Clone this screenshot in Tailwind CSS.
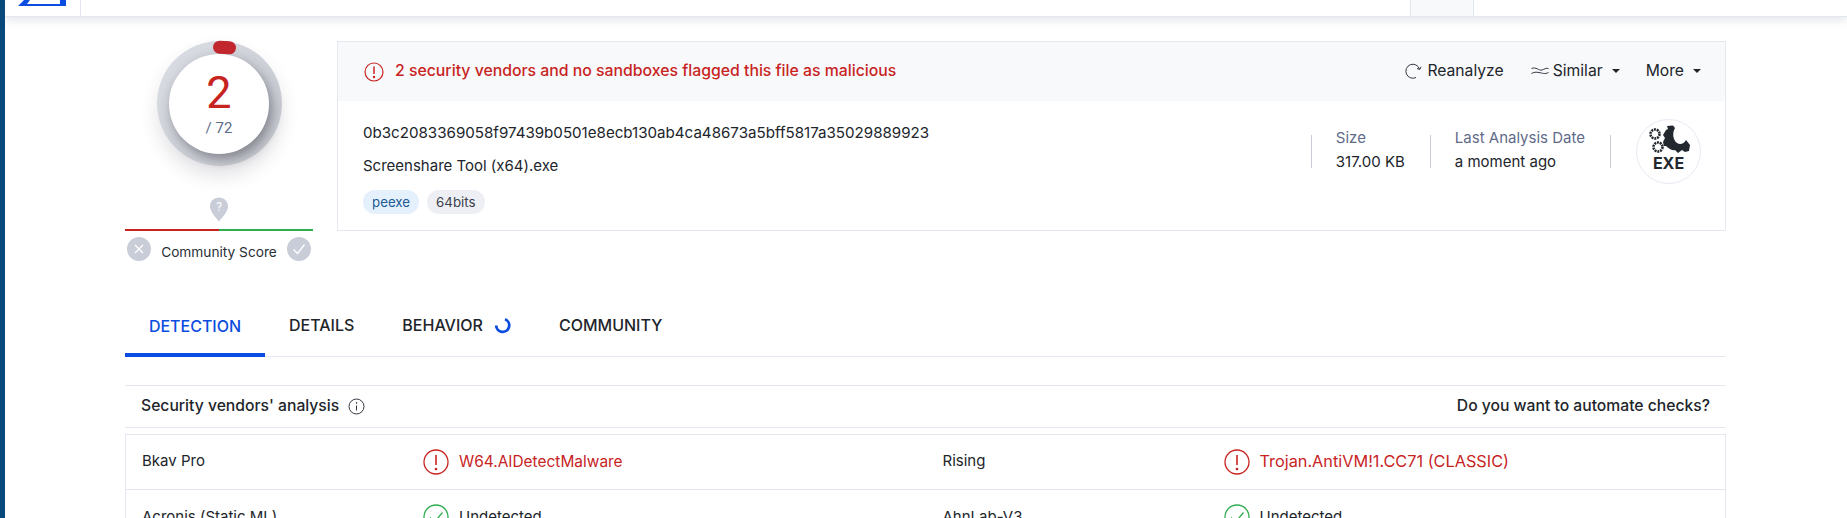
<!DOCTYPE html>
<html lang="en">
<head>
    <meta charset="UTF-8">
    <title>VirusTotal - File</title>
    <script src="https://cdn.jsdelivr.net/npm/@tailwindcss/browser@4"></script>
</head>
<body class="bg-white overflow-hidden font-['Inter',sans-serif] text-[#21252b]">
    <div class="flex h-[518px] overflow-hidden">
        <!-- Window edge -->
        <div class="w-[5px] shrink-0 bg-[#07497b]"></div>

        <div class="flex-1 min-w-0 flex flex-col">
            <!-- Top bar -->
            <div class="h-[17px] shrink-0 flex bg-white border-b border-[#e3e7f0] shadow-[0_3px_10px_rgba(80,90,120,0.16)]">
                <div class="w-[76px] shrink-0 pl-[13px] border-r border-[#e3e7f0] overflow-hidden">
                    <svg width="50" height="6" viewBox="0 0 50 6"><path d="M0 6 L6 0 H48 V6 Z M9 4 H42 V0 H12 Z" fill="#0b4de0" fill-rule="evenodd"/></svg>
                </div>
                <div class="flex-1"></div>
                <div class="w-[64px] shrink-0 bg-[#f8f9fb] border-x border-[#e3e7f0]"></div>
                <div class="w-[373px] shrink-0"></div>
            </div>

            <div class="w-[1601px] ml-[120px]">
                <!-- Score and file card -->
                <div class="flex gap-6 mt-[24px]">
                    <div class="w-[188px] shrink-0 flex flex-col items-center">
                        <div class="relative w-[125px] h-[125px] rounded-full bg-linear-to-br from-[#dcdee6] to-[#c4c6ce] shadow-[0_10px_18px_rgba(60,60,80,0.14)] flex items-center justify-center">
                            <div class="w-[100px] h-[100px] rounded-full bg-white shadow-[3px_5px_12px_rgba(30,30,40,0.42)] flex flex-col items-center pt-[19px] font-['Roboto',sans-serif]">
                                <div class="text-[45px] leading-[40px] text-[#c8241f]">2</div>
                                <div class="text-[15px] leading-[18px] mt-[6px] text-[#5f6b8a]">/ 72</div>
                            </div>
                            <div class="absolute top-0 left-[56px] w-[23px] h-[13px] rounded-full bg-[#c1272d] rotate-[4deg]"></div>
                        </div>
                        <svg class="mt-[31px]" width="20" height="25" viewBox="0 0 20 25">
                            <path d="M10 0.5 C15 0.5 19 4.3 19 9.3 C19 14.5 13.5 20.5 10 24.5 C6.5 20.5 1 14.5 1 9.3 C1 4.3 5 0.5 10 0.5 Z" fill="#c9cdd8"/>
                            <text x="10" y="14" text-anchor="middle" font-size="12" font-family="Roboto" fill="#ffffff">?</text>
                        </svg>
                        <div class="w-full flex h-[2px] mt-[7px]">
                            <div class="flex-1 bg-[#c8241f]"></div>
                            <div class="flex-1 bg-[#2fae4e]"></div>
                        </div>
                        <div class="w-full flex items-center justify-between px-[2px] mt-[5px]">
                            <div class="w-6 h-6 rounded-full bg-[#c9cdd8] flex items-center justify-center">
                                <svg width="12" height="12" viewBox="0 0 12 12" fill="none" stroke="#fff" stroke-width="1.3"><path d="M2 2 L10 10 M10 2 L2 10"/></svg>
                            </div>
                            <div class="text-[13.7px] mt-[6px] text-[#2b2f36]">Community Score</div>
                            <div class="w-6 h-6 rounded-full bg-[#c9cdd8] flex items-center justify-center">
                                <svg width="14" height="12" viewBox="0 0 14 12" fill="none" stroke="#fff" stroke-width="1.3"><path d="M1.5 6.5 L5.5 10.5 L12.5 1.5"/></svg>
                            </div>
                        </div>
                    </div>

                    <div class="flex-1 min-w-0 h-[190px] border border-[#e5e8f0]">
                        <div class="h-[59px] bg-[#f8f9fb] flex items-center pl-[26px] pr-[24px]">
                            <svg width="20" height="20" viewBox="0 0 20 20" fill="none" stroke="#c8241f" stroke-width="1.2"><circle cx="10" cy="10" r="9"/><path d="M10 4.5 V12" stroke-width="1.5"/><circle cx="10" cy="15" r="0.6" fill="#c8241f"/></svg>
                            <div class="ml-[11px] -mt-px text-[15.8px] font-medium text-[#c8241f]">2 security vendors and no sandboxes flagged this file as malicious</div>
                            <div class="ml-auto -mt-px flex items-center text-[15.7px] font-normal text-[#21252b]">
                                <svg width="18" height="18" viewBox="0 0 18 18" fill="none" stroke="#333842" stroke-width="1"><path d="M15.5 7 A7 7 0 1 0 12 15.5"/><path d="M13 6.5 L15.7 7.5 L17 4.8"/></svg>
                                <span class="ml-[5px]">Reanalyze</span>
                                <svg class="ml-[27px]" width="18" height="10" viewBox="0 0 18 10" fill="none" stroke="#333842" stroke-width="1"><path d="M0.5 2.5 C5 0.5 8 5 11 4 C13 3.5 15 1.5 17.5 2.5"/><path d="M0.5 7.5 C3 6 5 6 8 6.5 C11 7 14 8.5 17.5 6.5"/></svg>
                                <span class="ml-[4px]">Similar</span>
                                <span class="ml-[9px] w-0 h-0 border-x-[4px] border-x-transparent border-t-[4px] border-t-[#21252b]"></span>
                                <span class="ml-[26px]">More</span>
                                <span class="ml-[9px] w-0 h-0 border-x-[4px] border-x-transparent border-t-[4px] border-t-[#21252b]"></span>
                            </div>
                        </div>
                        <div class="flex pl-[25px] pr-[24px]">
                            <div class="flex-1 min-w-0 pt-[22px]">
                                <div class="text-[15.12px] leading-[20px]">0b3c2083369058f97439b0501e8ecb130ab4ca48673a5bff5817a35029889923</div>
                                <div class="text-[15px] leading-[20px] mt-[13px]">Screenshare Tool (x64).exe</div>
                                <div class="flex gap-[8px] mt-[14px]">
                                    <span class="h-6 px-[9px] rounded-full bg-[#e4f1fd] text-[13.3px] leading-6 text-[#1c5a96]">peexe</span>
                                    <span class="h-6 px-[9px] rounded-full bg-[#eeeff4] text-[13.3px] leading-6 text-[#3a3f4a]">64bits</span>
                                </div>
                            </div>
                            <div class="flex items-center h-[65px] mt-[18px]">
                                <div class="w-px h-[33px] bg-[#c9ccd4]"></div>
                                <div class="pl-[24px] pr-[25px] -mt-[2px]">
                                    <div class="text-[15px] leading-[22px] text-[#5f6b8a]">Size</div>
                                    <div class="text-[15px] leading-[26px]">317.00 KB</div>
                                </div>
                                <div class="w-px h-[33px] bg-[#c9ccd4]"></div>
                                <div class="pl-[24px] pr-[25px] -mt-[2px]">
                                    <div class="text-[15px] leading-[22px] text-[#5f6b8a]">Last Analysis Date</div>
                                    <div class="text-[15px] leading-[26px]">a moment ago</div>
                                </div>
                                <div class="w-px h-[33px] bg-[#c9ccd4]"></div>
                                <div class="ml-[25px] w-[65px] h-[65px] rounded-full border border-[#e8e9f2] flex flex-col items-center pt-[5px]">
                                    <svg width="44" height="33" viewBox="0 0 44 33" fill="none">
                                        <circle cx="8" cy="9" r="4.5" stroke="#23272e" stroke-width="2.6" stroke-dasharray="2 0.8"/>
                                        <circle cx="11" cy="22" r="4.5" stroke="#23272e" stroke-width="2.6" stroke-dasharray="2 0.8"/>
                                        <path d="M19 5 L21 4 L20 1 L26 0.5 L28 3 C25 8 26 15 30 18 C33 20 37 19 39 15 L43 20 L42 26 L38 27 L35 25 L31 28 L28 25 C24 26 22 23 19 21 L17 21 L16 17 L18 13 L16 10 Z" fill="#23272e"/>
                                    </svg>
                                    <div class="text-[16px] leading-[14px] font-bold -mt-[2px] text-[#23272e]">EXE</div>
                                </div>
                            </div>
                        </div>
                    </div>
                </div>

                <!-- Tabs -->
                <div class="flex mt-[32px] h-[62px] border-b border-[#e5e8f0] text-[16px] font-medium">
                    <div class="w-[140px] flex items-center justify-center text-[#0b4de0] border-b-[4px] border-[#0b4de0] -mb-px pt-[4px]">DETECTION</div>
                    <div class="ml-[24px] flex items-center">DETAILS</div>
                    <div class="ml-[48px] flex items-center">BEHAVIOR
                        <svg class="ml-[11px]" width="17" height="17" viewBox="0 0 17 17" fill="none" stroke="#0b4de0" stroke-width="2.8"><path d="M11 2.3 A6.5 6.5 0 1 1 2.2 8.5"/></svg>
                    </div>
                    <div class="ml-[48px] flex items-center">COMMUNITY</div>
                </div>

                <!-- Vendors -->
                <div class="mt-[28px] h-[43px] border-y border-[#e5e8f0] flex items-center justify-between pl-[16px] pr-[16px] text-[15.7px] font-medium">
                    <div class="flex items-center">Security vendors' analysis
                        <svg class="ml-[9px]" width="17" height="17" viewBox="0 0 17 17" fill="none" stroke="#33373f" stroke-width="1"><circle cx="8.5" cy="8.5" r="7.5"/><path d="M8.5 7.5 V12.5"/><circle cx="8.5" cy="5" r="0.4" fill="#33373f"/></svg>
                    </div>
                    <div>Do you want to automate checks?</div>
                </div>

                <div class="mt-[6px] border border-[#e5e8f0] grid grid-cols-2 text-[15px]">
                    <div class="h-[55px] border-b border-[#e5e8f0] flex items-center pl-[16px]">
                        <div class="w-[281px]">Bkav Pro</div>
                        <svg width="26" height="26" viewBox="0 0 26 26" fill="none" stroke="#c8241f" stroke-width="1.3"><circle cx="13" cy="13" r="12"/><path d="M13 6 V16" stroke-width="1.6"/><circle cx="13" cy="20" r="0.7" fill="#c8241f"/></svg>
                        <div class="ml-[10px] text-[15.45px] text-[#c8241f]">W64.AIDetectMalware</div>
                    </div>
                    <div class="h-[55px] border-b border-[#e5e8f0] flex items-center pl-[17px]">
                        <div class="w-[281px]">Rising</div>
                        <svg width="26" height="26" viewBox="0 0 26 26" fill="none" stroke="#c8241f" stroke-width="1.3"><circle cx="13" cy="13" r="12"/><path d="M13 6 V16" stroke-width="1.6"/><circle cx="13" cy="20" r="0.7" fill="#c8241f"/></svg>
                        <div class="ml-[10px] text-[16.3px] text-[#c8241f]">Trojan.AntiVM!1.CC71 (CLASSIC)</div>
                    </div>
                    <div class="h-[55px] flex items-center pl-[16px]">
                        <div class="w-[281px]">Acronis (Static ML)</div>
                        <svg width="26" height="26" viewBox="0 0 26 26" fill="none" stroke="#2fae4e" stroke-width="1.3"><circle cx="13" cy="13" r="12"/><path d="M7 13.5 L11.5 18 L19.5 8.5"/></svg>
                        <div class="ml-[10px]">Undetected</div>
                    </div>
                    <div class="h-[55px] flex items-center pl-[17px]">
                        <div class="w-[281px]">AhnLab-V3</div>
                        <svg width="26" height="26" viewBox="0 0 26 26" fill="none" stroke="#2fae4e" stroke-width="1.3"><circle cx="13" cy="13" r="12"/><path d="M7 13.5 L11.5 18 L19.5 8.5"/></svg>
                        <div class="ml-[10px]">Undetected</div>
                    </div>
                </div>
            </div>
        </div>
    </div>
</body>
</html>
